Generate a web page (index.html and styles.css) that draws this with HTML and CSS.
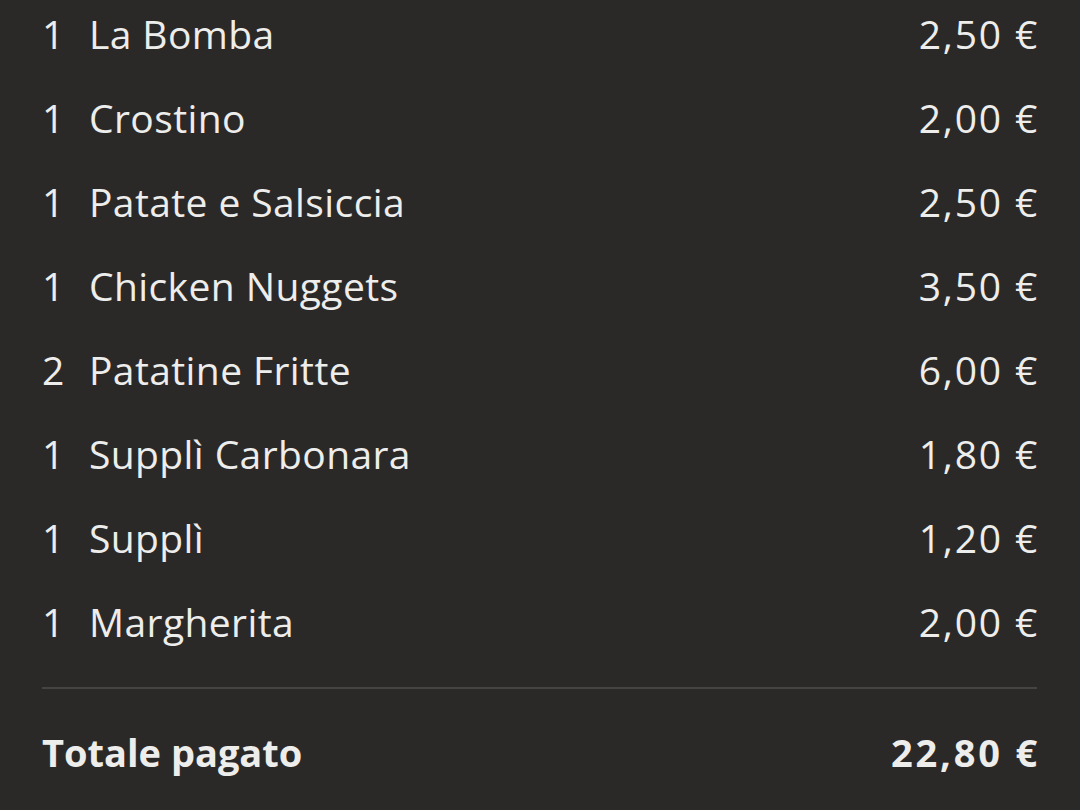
FILE: index.html
```html
<!DOCTYPE html>
<html lang="it">
<head>
    <meta charset="UTF-8">
    <meta name="viewport" content="width=device-width, initial-scale=1.0">
    <title>Riepilogo ordine</title>
    <link rel="stylesheet" href="styles.css">
</head>
<body>
    <div class="receipt">
        <ul class="items">
            <li class="item"><span class="qty">1</span><span class="name">La Bomba</span><span class="price">2,50 €</span></li>
            <li class="item"><span class="qty">1</span><span class="name">Crostino</span><span class="price">2,00 €</span></li>
            <li class="item"><span class="qty">1</span><span class="name">Patate e Salsiccia</span><span class="price">2,50 €</span></li>
            <li class="item"><span class="qty">1</span><span class="name">Chicken Nuggets</span><span class="price">3,50 €</span></li>
            <li class="item"><span class="qty">2</span><span class="name">Patatine Fritte</span><span class="price">6,00 €</span></li>
            <li class="item"><span class="qty">1</span><span class="name">Supplì Carbonara</span><span class="price">1,80 €</span></li>
            <li class="item"><span class="qty">1</span><span class="name">Supplì</span><span class="price">1,20 €</span></li>
            <li class="item"><span class="qty">1</span><span class="name">Margherita</span><span class="price">2,00 €</span></li>
        </ul>
        <div class="divider"></div>
        <div class="total">
            <span class="total-label">Totale pagato</span>
            <span class="total-price">22,80 €</span>
        </div>
    </div>
</body>
</html>
```

FILE: styles.css
```css
body {
    margin: 0;
    padding: 0;
    background-color: #2a2928;
    color: #ededec;
    font-family: "Open Sans", "Liberation Sans", sans-serif;
    overflow: hidden;
}
.receipt {
    padding: 0 43px 0 42px;
}
.items {
    list-style: none;
    margin: -3px 0 0;
    padding: 0;
    display: flex;
    flex-direction: column;
    gap: 12px;
}
.item {
    display: flex;
    align-items: center;
    height: 72px;
    font-size: 39px;
}
.qty {
    width: 47px;
}
.name {
    flex: 1;
    letter-spacing: 0.4px;
}
.price {
    letter-spacing: 1.8px;
    margin-right: -2px;
}
.divider {
    height: 2px;
    background-color: #454443;
    margin: 30px 0 27px;
}
.total {
    display: flex;
    align-items: center;
    justify-content: space-between;
    height: 72px;
    font-size: 38px;
    font-weight: 700;
}
.total-price {
    letter-spacing: 2.8px;
    margin-right: -3px;
}
```
